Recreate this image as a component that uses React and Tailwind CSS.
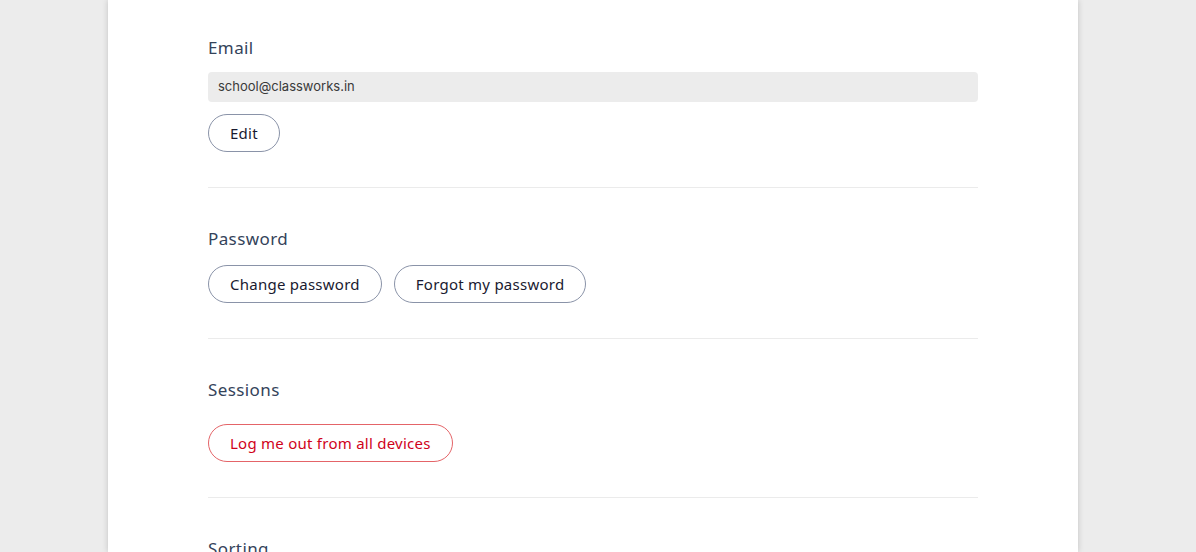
import React from "react";

const font = { fontFamily: '"Noto Sans", "Open Sans", sans-serif' };

function Pill({ children, red }) {
  return (
    <button
      className={
        "h-[38px] rounded-full border bg-white px-[21px] text-[15px] font-[450] tracking-[0.25px] leading-none " +
        (red
          ? "border-[#e46468] text-[#d0021b]"
          : "border-[#8a93a8] text-[#1a1a30]")
      }
    >
      {children}
    </button>
  );
}

const label = "text-[17px] leading-[24px] tracking-[0.4px] text-[#34435a]";

export default function App() {
  return (
    <div className="h-[552px] bg-[#ececec] flex justify-center overflow-hidden pr-[10px]" style={font}>
      <div className="w-[970px] shrink-0 bg-white shadow-[0_0_6px_rgba(0,0,0,0.18)] px-[100px] pt-[36px]">
        <section className="border-b border-[#ebebeb] pb-[35px]">
          <h2 className={label}>Email</h2>
          <div className="mt-[12px] h-[30px] rounded-[4px] bg-[#ececec] px-[10px] flex items-center text-[13px] text-[#3a3a3a]" style={{ fontFamily: 'Inter, "Noto Sans", sans-serif' }}>
            school@classworks.in
          </div>
          <div className="mt-[12px]">
            <Pill>Edit</Pill>
          </div>
        </section>
        <section className="border-b border-[#ebebeb] pt-[39px] pb-[35px]">
          <h2 className={label}>Password</h2>
          <div className="mt-[14px] flex gap-[12px]">
            <Pill>Change password</Pill>
            <Pill>Forgot my password</Pill>
          </div>
        </section>
        <section className="border-b border-[#ebebeb] pt-[39px] pb-[35px]">
          <h2 className={label}>Sessions</h2>
          <div className="mt-[22px] flex">
            <Pill red>Log me out from all devices</Pill>
          </div>
        </section>
        <section className="pt-[39px]">
          <h2 className={label}>Sorting</h2>
        </section>
      </div>
    </div>
  );
}
